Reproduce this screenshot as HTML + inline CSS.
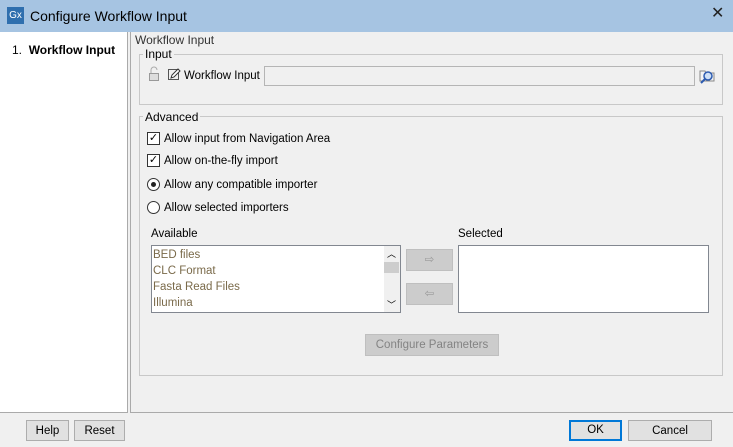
<!DOCTYPE html>
<html><head><style>
*{box-sizing:border-box;margin:0;padding:0}
body{width:733px;height:447px;background:#f0f0f0;font-family:"Liberation Sans",sans-serif;font-size:11.5px;line-height:15px;color:#000;position:relative;overflow:hidden}
.a{position:absolute}
.title{left:0;top:0;width:733px;height:32px;background:#a6c4e2}
.grp{border:1px solid #c8c8c8}
.leg{background:#f0f0f0;padding:0 2px;line-height:14px}
.btn{border:1px solid #adadad;background:#e1e1e1;text-align:center;line-height:20px}
.cb{width:13px;height:13px;border:1px solid #333;background:#fff}
.list{background:#fff;border:1px solid #828790}
.it{color:#7a6a4a;line-height:16px;padding-left:1px}
</style></head><body>
<div class="a title"></div>
<div class="a" style="left:7px;top:7px;width:17px;height:17px;background:#2f6fae;color:#fff;font-size:10px;line-height:17px;text-align:center">Gx</div>
<div class="a" style="left:30px;top:8px;font-size:14px;line-height:16px">Configure Workflow Input</div>
<div class="a" style="left:711px;top:6px;font-size:16px;color:#222">✕</div>

<div class="a" style="left:0;top:32px;width:128px;height:381px;background:#fff;border-right:1px solid #aaa;border-bottom:1px solid #aaa"></div>
<div class="a" style="left:130px;top:32px;width:603px;height:381px;border-left:1px solid #aaa;border-bottom:1px solid #aaa"></div>
<div class="a" style="left:12px;top:43px;font-size:12px">1.&nbsp;&nbsp;<b>Workflow Input</b></div>

<div class="a" style="left:135px;top:33px;color:#333;font-size:12px">Workflow Input</div>
<div class="a grp" style="left:139px;top:54px;width:584px;height:51px"></div>
<div class="a leg" style="left:143px;top:47px;font-size:12px">Input</div>
<svg class="a" style="left:148px;top:66px" width="12" height="16"><path d="M3 7V4a3 3 0 0 1 6 0" fill="none" stroke="#aaa"/><rect x="1.5" y="7.5" width="9" height="7" fill="#ddd" stroke="#999"/></svg>
<svg class="a" style="left:167px;top:67px" width="14" height="14"><rect x="1.5" y="2.5" width="10" height="10" fill="none" stroke="#555"/><path d="M4 11l1-3 6-6 2 2-6 6z" fill="#fff" stroke="#333"/></svg>
<div class="a" style="left:184px;top:69px">Workflow Input</div>
<div class="a" style="left:264px;top:66px;width:431px;height:20px;border:1px solid #b5b5b5;background:#f0f0f0"></div>
<svg class="a" style="left:698px;top:66px" width="18" height="18"><path d="M2 5h5l1 2h8v8H2z" fill="#f4f4f4" stroke="#888"/><circle cx="10" cy="10" r="4" fill="#cfe0f5" stroke="#2d5bb0" stroke-width="1.5"/><path d="M7 13l-4 4" stroke="#2d5bb0" stroke-width="2"/></svg>

<div class="a grp" style="left:139px;top:116px;width:584px;height:260px"></div>
<div class="a leg" style="left:143px;top:110px;font-size:12px">Advanced</div>
<div class="a cb" style="left:147px;top:132px;font-size:11px;line-height:11px;text-align:center">✓</div>
<div class="a" style="left:164px;top:132px">Allow input from Navigation Area</div>
<div class="a cb" style="left:147px;top:154px;font-size:11px;line-height:11px;text-align:center">✓</div>
<div class="a" style="left:164px;top:154px">Allow on-the-fly import</div>
<div class="a cb" style="left:147px;top:178px;border-radius:50%"></div>
<div class="a" style="left:151px;top:182px;width:5px;height:5px;border-radius:50%;background:#222"></div>
<div class="a" style="left:164px;top:178px">Allow any compatible importer</div>
<div class="a cb" style="left:147px;top:201px;border-radius:50%"></div>
<div class="a" style="left:164px;top:201px">Allow selected importers</div>

<div class="a" style="left:151px;top:227px">Available</div>
<div class="a list" style="left:151px;top:245px;width:250px;height:68px;padding-top:1px">
<div class="it">BED files</div><div class="it">CLC Format</div><div class="it">Fasta Read Files</div><div class="it">Illumina</div></div>
<div class="a" style="left:384px;top:246px;width:16px;height:66px;background:#f0f0f0"></div>
<div class="a" style="left:384px;top:262px;width:15px;height:11px;background:#cdcdcd"></div>
<div class="a" style="left:387px;top:247px;font-size:9px">︿</div>
<div class="a" style="left:387px;top:298px;font-size:9px">﹀</div>
<div class="a btn" style="left:406px;top:249px;width:47px;height:22px;background:#ccc;border-color:#bfbfbf;color:#999">⇨</div>
<div class="a btn" style="left:406px;top:283px;width:47px;height:22px;background:#ccc;border-color:#bfbfbf;color:#999">⇦</div>
<div class="a" style="left:458px;top:227px">Selected</div>
<div class="a list" style="left:458px;top:245px;width:251px;height:68px"></div>
<div class="a btn" style="left:365px;top:334px;width:134px;height:22px;background:#ccc;border-color:#bfbfbf;color:#838383">Configure Parameters</div>

<div class="a btn" style="left:26px;top:420px;width:43px;height:21px">Help</div>
<div class="a btn" style="left:74px;top:420px;width:51px;height:21px">Reset</div>
<div class="a btn" style="left:569px;top:420px;width:53px;height:21px;border:2px solid #0078d7;line-height:17px">OK</div>
<div class="a btn" style="left:628px;top:420px;width:84px;height:21px">Cancel</div>
</body></html>
